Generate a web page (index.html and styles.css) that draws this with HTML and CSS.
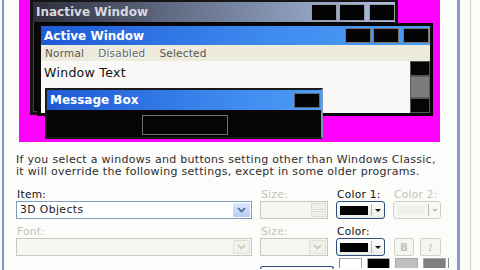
FILE: index.html
```html
<!DOCTYPE html>
<html lang="en">
<head>
  <meta charset="UTF-8" />
  <title>Advanced Appearance</title>
  <link rel="stylesheet" href="styles.css">
</head>
<body>
  <div class="screen">
    <div class="dialog">
      <!-- Preview of window elements -->
      <div class="preview">
        <div class="win inactive">
          <div class="title">
            <span class="caption">Inactive Window</span>
            <span class="btns"><i></i><i></i><i class="last"></i></span>
          </div>
        </div>

        <div class="win active">
          <div class="title">
            <span class="caption">Active Window</span>
            <span class="btns"><i></i><i></i><i class="last"></i></span>
          </div>
          <div class="menu">
            <span>Normal</span>
            <span class="dis">Disabled</span>
            <span>Selected</span>
          </div>
          <div class="client">
            <div class="wtext">Window Text</div>
            <div class="scroll">
              <i class="arrow"></i>
              <i class="thumb"></i>
              <i class="arrow"></i>
            </div>
          </div>
        </div>

        <div class="win msgbox">
          <div class="title">
            <span class="caption">Message Box</span>
            <span class="btns"><i></i></span>
          </div>
          <div class="msgbody"><span class="okbtn"></span></div>
        </div>
      </div>

      <p class="note">If you select a windows and buttons setting other than Windows Classic,<br />
        it will override the following settings, except in some older programs.</p>

      <!-- Item / font settings -->
      <div class="form">
        <div class="field">
          <label>Item:</label>
          <div class="select">
            <span class="value">3D Objects</span>
            <span class="drop"><svg width="9" height="6" viewBox="0 0 9 6"><path d="M1 1l3.5 3.5L8 1" fill="none" stroke="#4d6185" stroke-width="1.6"/></svg></span>
          </div>
        </div>
        <div class="field">
          <label class="off">Size:</label>
          <div class="select disabled">
            <span class="value"></span>
            <span class="spin"><i class="up"></i><i class="down"></i></span>
          </div>
        </div>
        <div class="field">
          <label>Color 1:</label>
          <div class="colorbtn">
            <span class="swatch"></span>
            <span class="caret"></span>
          </div>
        </div>
        <div class="field">
          <label class="off">Color 2:</label>
          <div class="colorbtn disabled">
            <span class="swatch"></span>
            <span class="caret"></span>
          </div>
        </div>

        <div class="field row2">
          <label class="off">Font:</label>
          <div class="select disabled">
            <span class="value"></span>
            <span class="drop"><svg width="9" height="6" viewBox="0 0 9 6"><path d="M1 1l3.5 3.5L8 1" fill="none" stroke="#c9c7ba" stroke-width="1.6"/></svg></span>
          </div>
        </div>
        <div class="field row2">
          <label class="off">Size:</label>
          <div class="select disabled">
            <span class="value"></span>
            <span class="drop"><svg width="9" height="6" viewBox="0 0 9 6"><path d="M1 1l3.5 3.5L8 1" fill="none" stroke="#c9c7ba" stroke-width="1.6"/></svg></span>
          </div>
        </div>
        <div class="field row2">
          <label>Color:</label>
          <div class="colorbtn">
            <span class="swatch"></span>
            <span class="caret"></span>
          </div>
        </div>
        <div class="field row2 styles">
          <span class="tbtn bold">B</span>
          <span class="tbtn ital">I</span>
        </div>

        <div class="row3 spacer"></div>
        <div class="row3"><span class="pushbtn"></span></div>
        <div class="row3 palette">
          <i class="white"></i><i class="black"></i><i class="silver"></i><i class="gray"></i>
        </div>
      </div>
    </div>
    <div class="edge"></div>
  </div>
</body>
</html>
```

FILE: styles.css
```css
* {
  box-sizing: border-box;
}

body {
  margin: 0;
  width: 480px;
  height: 270px;
  overflow: hidden;
  background: #fcfcfa;
  font-family: "DejaVu Sans", Verdana, sans-serif;
  color: #222;
}

/* ----------- FRAME ----------- */
.screen {
  display: flex;
  height: 270px;
}

.dialog {
  margin-left: 2px;
  width: 458px;
  height: 270px;
  overflow: hidden;
  border-left: 2px solid #8491d2;
  border-right: 3px solid #8a95d4;
  background: #fcfcfa;
}

.edge {
  margin-left: 10px;
  width: 10px;
  border-left: 1px solid #d2d0c8;
}

/* ----------- PREVIEW ----------- */
.preview {
  position: relative;
  margin-left: 15px;
  width: 421px;
  height: 142px;
  background: #ff00ff;
  overflow: hidden;
}

.win {
  position: absolute;
  background: #050505;
}

.title {
  display: flex;
  align-items: center;
  justify-content: space-between;
  color: #fff;
  font-weight: bold;
  font-size: 12px;
}

.caption {
  padding-left: 3px;
}

.btns {
  display: flex;
  gap: 2px;
}

.btns i {
  display: block;
  width: 26px;
  background: #030303;
  border: 1px solid #777;
}

.btns i.last {
  margin-left: 2px;
}

.inactive {
  left: 11px;
  top: -1px;
  width: 368px;
  height: 116px;
  border: 3px solid #151515;
  box-shadow: inset 0 0 0 1px #444;
}

.inactive .title {
  height: 20px;
  color: #d8d8e0;
  background: linear-gradient(to right, #2e2e3c, #6a7690 45%, #aec1e2);
}

.inactive .btns i {
  height: 17px;
  border-color: #9a9aa4;
}

.active {
  left: 18px;
  top: 23px;
  width: 396px;
  height: 93px;
  border: 3px solid #080808;
  border-left-width: 4px;
}

.active .title {
  height: 19px;
  background: linear-gradient(to right, #1f5ad6, #3f8cf0 60%, #4c9df4);
}

.active .btns {
  padding-right: 1px;
}

.active .btns i {
  height: 15px;
}

.menu {
  display: flex;
  gap: 14px;
  height: 16px;
  padding-left: 4px;
  align-items: center;
  background: #ecebdc;
  font-size: 10.5px;
  letter-spacing: 0.2px;
  color: #555;
}

.menu .dis {
  color: #666;
  text-shadow: 1px 1px 0 #fff;
}

.client {
  display: flex;
  height: 52px;
  background: #f8f8f6;
}

.wtext {
  flex: 1;
  padding: 4px 0 0 3px;
  font-size: 12.5px;
  letter-spacing: 0.3px;
  color: #111;
}

.scroll {
  display: flex;
  flex-direction: column;
  width: 20px;
  background: #111;
}

.scroll .arrow {
  display: block;
  height: 15px;
  border: 1px solid #555;
  background: #060606;
}

.scroll .thumb {
  display: block;
  flex: 1;
  background: #7c7c7c;
  border: 1px solid #5c5c5c;
}

.msgbox {
  left: 26px;
  top: 88px;
  width: 278px;
  height: 51px;
  border: 2px solid #1a1a1a;
  border-right-color: #7f93b8;
}

.msgbox .title {
  height: 20px;
  background: linear-gradient(to right, #1f5ad6, #3f8cf0 70%, #4c9df4);
}

.msgbox .btns {
  padding-right: 1px;
}

.msgbox .btns i {
  height: 15px;
  border-color: #606a80;
}

.msgbody {
  height: 27px;
  padding: 5px 0 0 95px;
}

.okbtn {
  display: block;
  width: 86px;
  height: 20px;
  border: 1px solid #707070;
}

/* ----------- TEXT + FORM ----------- */
.note {
  margin: 12px 0 0 12px;
  font-size: 11px;
  letter-spacing: 0.3px;
  line-height: 12px;
  color: #2e2e2e;
  white-space: nowrap;
}

.form {
  display: grid;
  grid-template-columns: 236px 68px 49px 48px;
  column-gap: 8px;
  margin: 10px 0 0 12px;
}

.field label {
  display: block;
  height: 13px;
  padding-left: 1px;
  font-size: 10.6px;
  letter-spacing: 0.3px;
  line-height: 12px;
  color: #111;
}

.field label.off {
  color: #c3c1b4;
}

.row2 {
  margin-top: 6px;
}

.select {
  display: flex;
  align-items: stretch;
  height: 18px;
  border: 1px solid #7f9db9;
  background: #fff;
}

.select .value {
  flex: 1;
  padding-left: 3px;
  font-size: 10.8px;
  letter-spacing: 0.4px;
  line-height: 16px;
}

.select .drop {
  display: flex;
  align-items: center;
  justify-content: center;
  width: 17px;
  margin: 1px;
  border-radius: 1px;
  background: linear-gradient(#dde7fe, #b8cbf8);
}

.select.disabled {
  border-color: #c9c7ba;
  background: #f6f6f2;
}

.select.disabled .drop {
  background: #f2f1ea;
  border: 1px solid #e2e0d6;
}

.spin {
  display: flex;
  flex-direction: column;
  width: 15px;
  margin: 1px;
  gap: 1px;
}

.spin i {
  flex: 1;
  background: #f0efe8;
  border: 1px solid #e0ded4;
}

.colorbtn {
  display: flex;
  align-items: center;
  height: 18px;
  padding: 0 3px;
  border: 1px solid #2c4f7c;
  border-radius: 3px;
  background: linear-gradient(#fefefe, #ecebe5);
}

.colorbtn .swatch {
  width: 30px;
  height: 9px;
  background: #000;
}

.colorbtn .caret {
  position: relative;
  width: 10px;
  height: 12px;
  margin-left: 3px;
  border-left: 1px solid #b8b8b0;
}

.colorbtn .caret::after {
  content: "";
  position: absolute;
  left: 3px;
  top: 5px;
  border-left: 3px solid transparent;
  border-right: 3px solid transparent;
  border-top: 3px solid #111;
}

.colorbtn.disabled {
  border-color: #d2d0c6;
  background: #f7f7f3;
}

.colorbtn.disabled .swatch {
  background: #f1f0ea;
}

.colorbtn.disabled .caret::after {
  border-top-color: #c3c1b4;
}

.styles {
  display: flex;
  align-items: flex-end;
  gap: 6px;
  padding-left: 1px;
}

.tbtn {
  display: flex;
  align-items: center;
  justify-content: center;
  width: 20px;
  height: 18px;
  border: 1px solid #d4d2c8;
  border-radius: 2px;
  background: #f6f5f0;
  color: #c3c1b4;
  font-size: 10px;
}

.tbtn.bold {
  font-weight: bold;
}

.tbtn.ital {
  width: 21px;
  font-style: italic;
  font-family: "DejaVu Serif", serif;
}

.row3 {
  height: 10px;
  margin-top: 2px;
}

.pushbtn {
  display: block;
  width: 74px;
  height: 3px;
  margin: 8px 0 0 0;
  border: 1px solid #2c4f7c;
  border-bottom: 0;
  border-radius: 3px 3px 0 0;
}

.palette {
  grid-column: 3 / span 2;
  display: flex;
  gap: 5px;
  width: 113px;
  margin-left: 0;
  padding-left: 3px;
  border-right: 1px solid #8a8a8a;
}

.palette i {
  display: block;
  width: 23px;
  height: 10px;
  border: 1px solid #a8a8a8;
  border-bottom: 0;
}

.palette .white { background: #fff; border-left-color: #888; }
.palette .black { background: #000; }
.palette .silver { background: #c0c0c0; }
.palette .gray { background: #808080; }
```
